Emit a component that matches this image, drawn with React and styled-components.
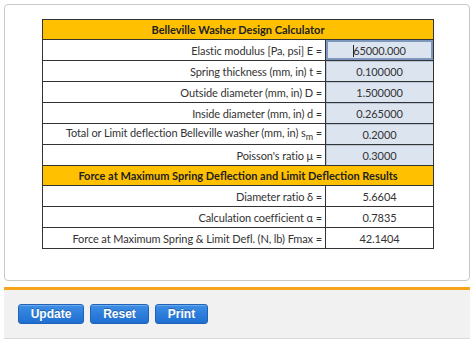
import React from "react";
import styled, { createGlobalStyle } from "styled-components";

const Global = createGlobalStyle`
  html, body { margin: 0; padding: 0; background: #fff; }
  body { font-family: Lato, "Open Sans", sans-serif; }
`;

const Page = styled.div`
  width: 474px;
  height: 343px;
  display: flex;
  flex-direction: column;
`;

const Card = styled.div`
  margin: 4px 4px 0 4px;
  height: 277px;
  border: 1px solid #c8c8c8;
  border-radius: 4px;
  box-sizing: border-box;
  padding: 14px 0 0 37px;
`;

const Table = styled.table`
  border-collapse: collapse;
  width: 391px;
  table-layout: fixed;
  font-family: Lato, sans-serif;
  font-size: 11px;
  letter-spacing: -0.1px;
  color: #333;
`;

const HeadCell = styled.td`
  background: #ffc000;
  border: 1px solid #333;
  height: 19px;
  padding: 0;
  text-align: center;
  font-weight: bold;
  letter-spacing: 0;
  color: #222;
`;

const Label = styled.td`
  border: 1px solid #333;
  height: 20px;
  padding: 0 3px 0 0;
  text-align: right;
  white-space: nowrap;
`;

const Value = styled.td`
  border: 1px solid #333;
  padding: 0;
  height: 20px;
  text-align: center;
  background: ${(p) => (p.$input ? "#dce4f0" : "#fff")};
  box-shadow: ${(p) =>
    p.$focus
      ? "inset 0 0 0 2px #7e98bd"
      : p.$input
      ? "inset 1px 1px 0 #b8c4d6"
      : "none"};
`;

const Cursor = styled.span`
  display: inline-block;
  width: 1px;
  height: 12px;
  background: #222;
  vertical-align: -2px;
  margin-right: -1px;
`;

const Sub = styled.sub`
  font-size: 9px;
`;

const Footer = styled.div`
  margin: 6px 4px 0 4px;
  border-top: 3px solid #f5a41b;
  border-bottom: 1px solid #d8d8d8;
  background: #f1f1f1;
  height: 48px;
  display: flex;
  align-items: center;
  gap: 6px;
  padding: 0 0 0 14px;
  box-sizing: content-box;
`;

const Button = styled.button`
  height: 20px;
  width: ${(p) => p.$w}px;
  border: 1px solid #1f62b8;
  border-radius: 3px;
  background: linear-gradient(#3c8ee6, #1f6fd0);
  color: #fff;
  font-family: "Liberation Sans", Arial, sans-serif;
  font-weight: bold;
  font-size: 12px;
  padding: 0;
  text-shadow: 0 -1px 0 rgba(0,0,0,0.3);
  box-shadow: inset 0 1px 0 rgba(255,255,255,0.25);
`;

const inputs = [
  ["Elastic modulus [Pa, psi] E =", "65000.000"],
  ["Spring thickness (mm, in) t =", "0.100000"],
  ["Outside diameter (mm, in) D =", "1.500000"],
  ["Inside diameter (mm, in) d =", "0.265000"],
  [null, "0.2000"],
  ["Poisson's ratio μ =", "0.3000"],
];

const results = [
  ["Diameter ratio δ =", "5.6604"],
  ["Calculation coefficient α =", "0.7835"],
  ["Force at Maximum Spring & Limit Defl. (N, lb) Fmax =", "42.1404"],
];

export default function App() {
  return (
    <Page>
      <Global />
      <Card>
        <Table>
          <colgroup>
            <col style={{ width: 283 }} />
            <col style={{ width: 108 }} />
          </colgroup>
          <tbody>
            <tr>
              <HeadCell colSpan={2}>Belleville Washer Design Calculator</HeadCell>
            </tr>
            {inputs.map(([l, v], i) => (
              <tr key={i}>
                <Label>
                  {l === null ? (
                    <>
                      Total or Limit deflection Belleville washer (mm, in) s<Sub>m</Sub> =
                    </>
                  ) : (
                    l
                  )}
                </Label>
                <Value $input $focus={i === 0}>
                  {i === 0 ? (
                    <>
                      <Cursor />
                      {v}
                    </>
                  ) : (
                    v
                  )}
                </Value>
              </tr>
            ))}
            <tr>
              <HeadCell colSpan={2}>Force at Maximum Spring Deflection and Limit Deflection Results</HeadCell>
            </tr>
            {results.map(([l, v], i) => (
              <tr key={i}>
                <Label>{l}</Label>
                <Value>{v}</Value>
              </tr>
            ))}
          </tbody>
        </Table>
      </Card>
      <Footer>
        <Button $w={66}>Update</Button>
        <Button $w={59}>Reset</Button>
        <Button $w={53}>Print</Button>
      </Footer>
    </Page>
  );
}
